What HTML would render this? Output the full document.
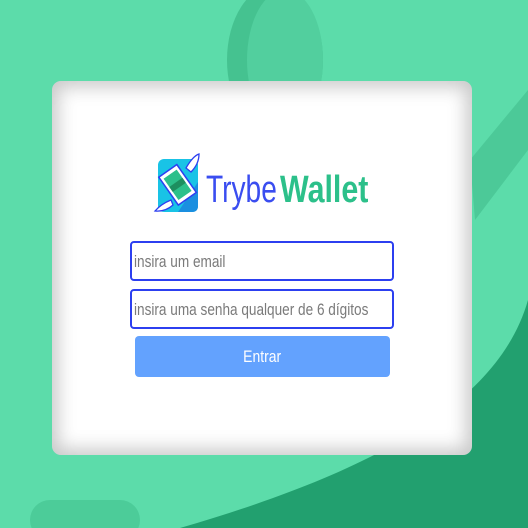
<!DOCTYPE html>
<html><head><meta charset="utf-8"><style>
*{margin:0;padding:0;box-sizing:border-box}
body{width:528px;height:528px;overflow:hidden;background:#5cdcaa;position:relative;font-family:"Liberation Sans",sans-serif}
.card{position:absolute;left:52px;top:81px;width:420px;height:374px;background:#fff;border-radius:9px;box-shadow:inset 0 0 18px 6px rgba(0,0,0,.22)}
.inp{position:absolute;left:130px;width:264px;height:40px;border:2px solid #2c3ff0;border-radius:4px;background:#fff}
.inp span{position:absolute;left:2px;top:0;line-height:38px;color:#7a7a7a;font-size:17px;white-space:nowrap;transform:scaleX(0.8);transform-origin:left center}
.btn{position:absolute;left:135px;top:336px;width:255px;height:41px;background:#63a2fe;border-radius:4px;color:#fff;text-align:center;line-height:41px;font-size:17px}
.btn span{display:inline-block;transform:scaleX(0.82)}
.t{position:absolute;top:168px;font-size:38px;line-height:44px;white-space:nowrap;transform-origin:left top}
.t1{left:206px;color:#3a4df0;transform:scaleX(0.74)}
.t2{left:280px;font-weight:bold;color:#2cc08a;transform:scaleX(0.8)}
</style></head><body>
<svg width="528" height="528" style="position:absolute;left:0;top:0">
<ellipse cx="275" cy="60" rx="48" ry="75" fill="#45c290"/>
<ellipse cx="285" cy="60" rx="38" ry="70" fill="#52cf9e"/>
<path d="M528 300 C 500 400 380 470 180 528 L528 528 Z" fill="#22a06f"/>
<path d="M470 160 L528 90 L528 150 L475 220 Z" fill="#4cc998"/>
<rect x="30" y="500" width="110" height="40" rx="20" fill="#4ccc99"/>
</svg>
<div class="card"></div>
<svg style="position:absolute;left:153px;top:152px" width="48" height="62" viewBox="0 0 48 62">
<rect x="5" y="7" width="40" height="53" rx="6" fill="#19c3e6"/>
<path d="M25 60 L45 30 L45 54 Q45 60 39 60 Z" fill="#1a8fe0"/>
<g transform="rotate(-35 24 32)"><rect x="13" y="16" width="22" height="34" fill="#fff" stroke="#2c3ff0" stroke-width="1.5"/><rect x="16" y="20" width="16" height="26" fill="#2cc08a"/><rect x="16" y="30" width="16" height="6" fill="#1d8f5f"/></g>
<path d="M33 16 Q40 4 46 2 Q46 12 38 20 Z" fill="#fff" stroke="#2c3ff0" stroke-width="1.3"/>
<path d="M18 48 Q8 52 2 59 Q12 60 20 53 Z" fill="#fff" stroke="#2c3ff0" stroke-width="1.3"/>
</svg>
<div class="t t1">Trybe</div>
<div class="t t2">Wallet</div>
<div class="inp" style="top:241px"><span>insira um email</span></div>
<div class="inp" style="top:289px"><span>insira uma senha qualquer de 6 dígitos</span></div>
<div class="btn"><span>Entrar</span></div>
</body></html>
